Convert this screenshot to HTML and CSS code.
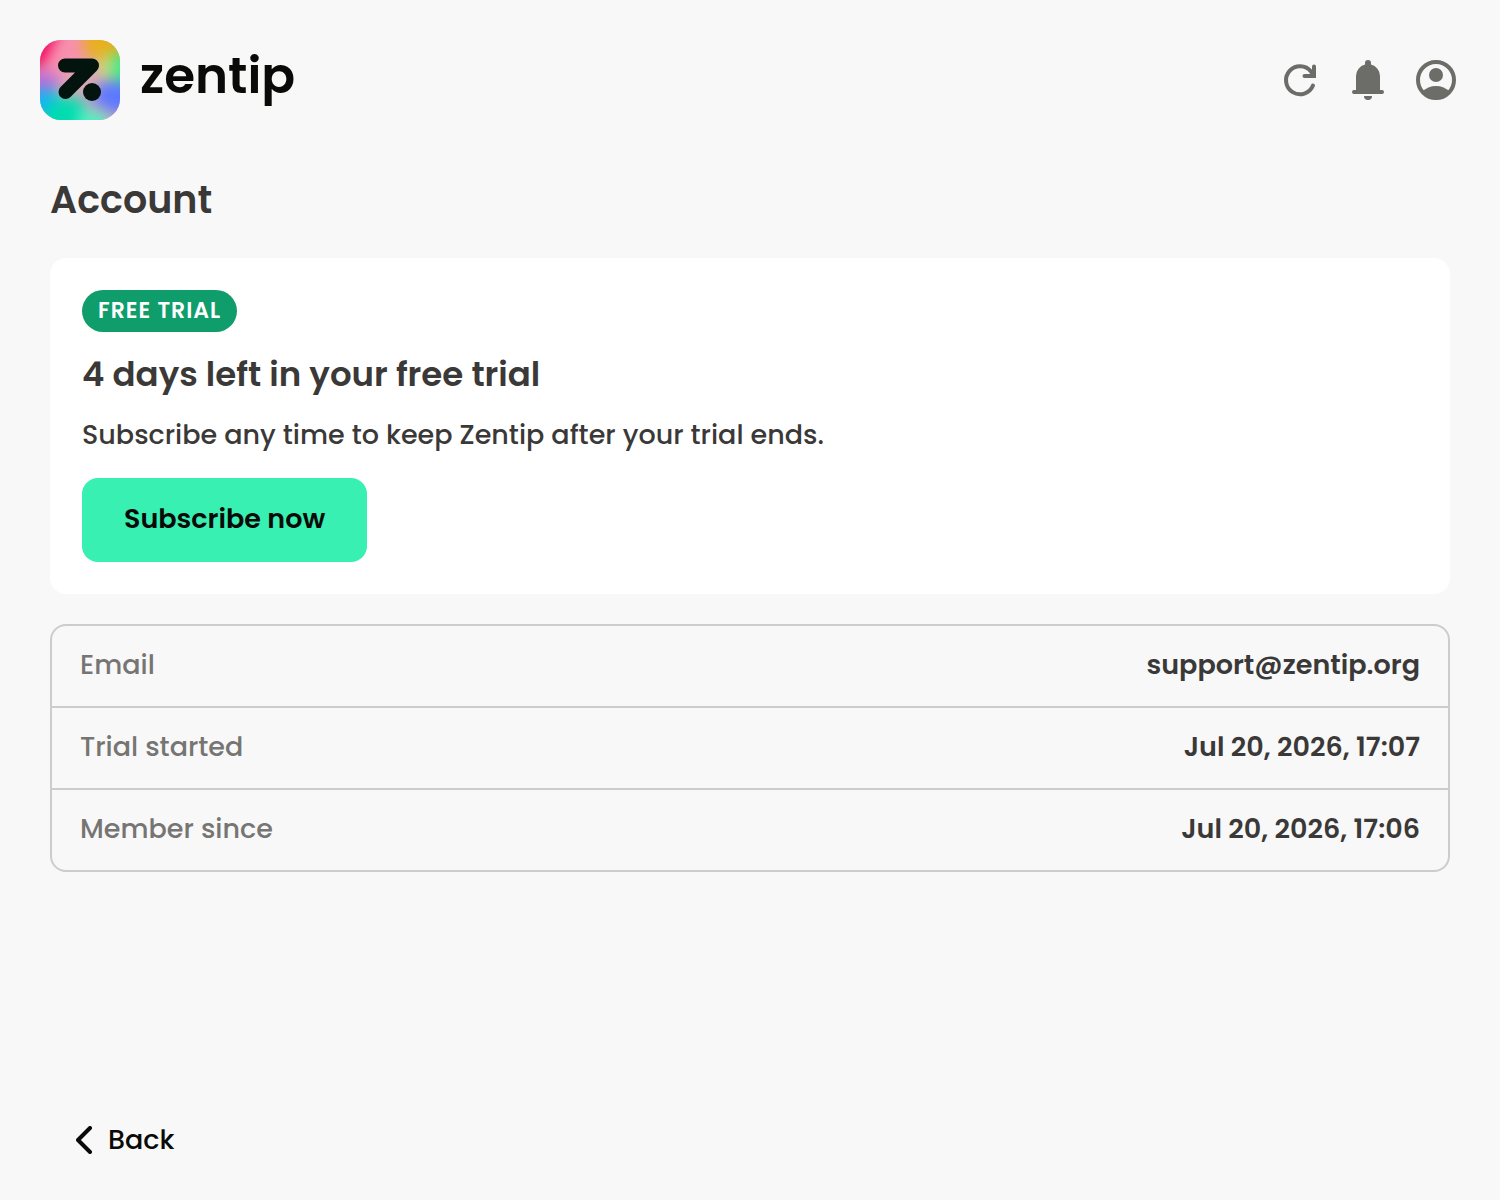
FILE: index.html
```html
<!DOCTYPE html>
<html lang="en">
<head>
  <meta charset="utf-8">
  <meta name="viewport" content="width=device-width, initial-scale=1">
  <title>Zentip – Account</title>
  <link rel="stylesheet" href="styles.css">
</head>
<body>
  <div class="page">
    <header class="header">
      <a class="brand" href="#home">
        <svg class="brand-mark" viewBox="0 0 80 80" aria-hidden="true">
          <defs>
            <clipPath id="tile"><rect width="80" height="80" rx="21"/></clipPath>
            <filter id="soft" x="-50%" y="-50%" width="200%" height="200%" color-interpolation-filters="sRGB"><feGaussianBlur stdDeviation="7"/></filter>
          </defs>
          <g clip-path="url(#tile)">
            <rect width="80" height="80" fill="#e0a8b8"/>
            <g filter="url(#soft)">
              <path d="M-30-30H30L22 4 8 24-30 34Z" fill="#f4005c"/>
              <path d="M24-20 44-4V20L24 36 8 34 4 22Z" fill="#f78fae"/>
              <path d="M42-30H110V18L66 26 44 14Z" fill="#e8b01c"/>
              <path d="M60 18 72 14V38H58Z" fill="#c9dc72"/>
              <path d="M72 14 110 6V42H72Z" fill="#45e88c"/>
              <path d="M-30 36 10 32 24 44-30 56Z" fill="#b468dc"/>
              <path d="M60 42 110 42V72L74 74 50 60Z" fill="#5c78ff"/>
              <path d="M-30 54 14 48 22 60 8 80H-30Z" fill="#14b4f4"/>
              <path d="M16 56 44 58 46 110H0V80Z" fill="#00dcb0"/>
              <path d="M40 68 66 74 76 110H34Z" fill="#50f0c0"/>
            </g>
          </g>
          <path d="M25 25.500H52L25.500 52" fill="none" stroke="#02140d" stroke-width="14" stroke-linecap="round" stroke-linejoin="round"/>
          <circle cx="52" cy="52" r="9" fill="#02140d"/>
        </svg>
        <span class="brand-name">zentip</span>
      </a>
      <nav class="actions" aria-label="Tools">
        <button class="icon-button" type="button" aria-label="Refresh">
          <svg viewBox="0 0 40 40" fill="none" stroke="currentColor" stroke-width="4" stroke-linecap="round"><path d="M33 25.500A14 14 0 1 1 31 11.500L33.500 15"/><path d="M34 6.500V16H24.500" stroke-linejoin="miter"/></svg>
        </button>
        <button class="icon-button" type="button" aria-label="Notifications">
          <svg viewBox="0 0 40 40" fill="currentColor"><path d="M17 4.500V3a3 3 0 0 1 6 0v1.500A12 12 0 0 1 32 16v14h2a2 2 0 0 1 0 4H6a2 2 0 0 1 0-4h2V16A12 12 0 0 1 17 4.500Z"/><path d="M16 36h8a4 4 0 0 1-8 0Z"/></svg>
        </button>
        <button class="icon-button" type="button" aria-label="Profile">
          <svg viewBox="0 0 40 40"><circle cx="20" cy="20" r="18" fill="none" stroke="currentColor" stroke-width="4"/><circle cx="20" cy="15" r="7" fill="currentColor"/><path d="M6.500 31.500C10 28 14.500 26 20 26s10 2 13.500 5.500C30 35.500 25.500 38 20 38S10 35.500 6.500 31.500Z" fill="currentColor"/></svg>
        </button>
      </nav>
    </header>

    <main class="content">
      <h1 class="title">Account</h1>
      <section class="plan">
        <span class="badge">FREE TRIAL</span>
        <h2 class="plan-title">4 days left in your free trial</h2>
        <p class="plan-text">Subscribe any time to keep Zentip after your trial ends.</p>
        <button class="subscribe" type="button">Subscribe now</button>
      </section>
      <table class="details">
        <tbody>
          <tr><th scope="row">Email</th><td>support@zentip.org</td></tr>
          <tr><th scope="row">Trial started</th><td>Jul 20, 2026, 17:07</td></tr>
          <tr><th scope="row">Member since</th><td>Jul 20, 2026, 17:06</td></tr>
        </tbody>
      </table>
    </main>

    <footer class="footer">
      <a class="back" href="#back">
        <svg class="back-icon" viewBox="0 0 16 28" fill="none" stroke="currentColor" stroke-width="4" stroke-linecap="round" stroke-linejoin="round" aria-hidden="true"><path d="M14 2 2 14l12 12"/></svg>
        Back
      </a>
    </footer>
  </div>
</body>
</html>
```
FILE: styles.css
```css
* {
  box-sizing: border-box;
}

body {
  margin: 0;
  background: #f8f8f8;
  color: #3a3938;
  font-family: Poppins, Inter, sans-serif;
  font-size: 27px;
  font-weight: 500;
  line-height: 42px;
}

button {
  border: 0;
  font: inherit;
  cursor: pointer;
}

.page {
  display: flex;
  flex-direction: column;
  min-height: 100vh;
}

.header {
  display: flex;
  align-items: center;
  justify-content: space-between;
  padding: 40px 44px 0 40px;
}

.brand {
  display: flex;
  gap: 20px;
  color: #0a0a08;
  text-decoration: none;
}

.brand-mark {
  width: 80px;
  height: 80px;
}

.brand-name {
  font-size: 50px;
  font-weight: 600;
  line-height: 72px;
}

.actions {
  display: flex;
  gap: 28px;
}

.icon-button {
  width: 40px;
  height: 40px;
  padding: 0;
  background: none;
  color: #6c6c69;
}

.icon-button svg {
  display: block;
  width: 100%;
}

.content {
  flex: 1;
  padding: 50px 50px 48px;
}

.title {
  margin: 0 0 28px;
  font-size: 38px;
  font-weight: 600;
  line-height: 60px;
}

.plan {
  display: flex;
  flex-direction: column;
  align-items: flex-start;
  margin-bottom: 30px;
  padding: 32px;
  border-radius: 16px;
  background: #fff;
}

.badge {
  padding: 4px 16px;
  border-radius: 21px;
  background: #0f9d6c;
  color: #fff;
  font-size: 22px;
  font-weight: 600;
  letter-spacing: 1px;
  line-height: 34px;
}

.plan-title {
  margin: 16px 0 14px;
  font-size: 34px;
  font-weight: 600;
  line-height: 52px;
}

.plan-text {
  margin: 0 0 22px;
}

.subscribe {
  padding: 20px 42px 22px;
  border-radius: 16px;
  background: #37f0b2;
  color: #0a0a08;
  font-weight: 600;
}

.details {
  width: 100%;
  border: 2px solid #cccccb;
  border-radius: 16px;
  border-spacing: 0;
}

.details th,
.details td {
  padding: 18px 28px 20px;
}

.details tr + tr > * {
  border-top: 2px solid #cccccb;
}

.details th {
  color: #767573;
  font-weight: 500;
  text-align: left;
}

.details td {
  font-weight: 600;
  text-align: right;
}

.footer {
  display: flex;
  padding: 0 76px 39px;
}

.back {
  display: flex;
  align-items: center;
  gap: 16px;
  color: #0a0a08;
  text-decoration: none;
}

.back-icon {
  width: 16px;
  height: 28px;
}
```
